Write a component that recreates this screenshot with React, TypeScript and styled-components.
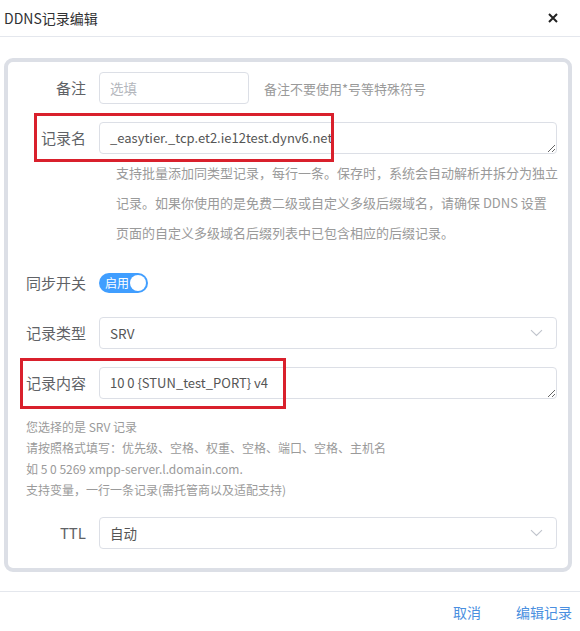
import React from "react";
import styled, { createGlobalStyle } from "styled-components";

const Global = createGlobalStyle`
  html, body { margin: 0; padding: 0; background: #fff; }
  body {
    font-family: "Noto Sans CJK SC", "Microsoft YaHei", sans-serif;
    color: #606266;
    overflow: hidden;
  }
  * { box-sizing: border-box; }
`;

const Dialog = styled.div`
  width: 580px;
  height: 631px;
  display: flex;
  flex-direction: column;
  overflow: hidden;
`;

const Header = styled.div`
  height: 37px;
  flex: none;
  display: flex;
  align-items: center;
  justify-content: space-between;
  padding: 0 22px 1px 4px;
  border-bottom: 1px solid #e4e7ed;
`;

const Title = styled.div`
  font-size: 14px;
  line-height: 20px;
  color: #303133;
`;

const CloseButton = styled.button`
  border: none;
  background: none;
  padding: 0;
  width: 10px;
  height: 10px;
  display: flex;
  cursor: pointer;
`;

const Body = styled.div`
  padding: 21px 8px 0 4px;
  flex: none;
`;

const Panel = styled.div`
  border: 4px solid #dcdfe6;
  border-radius: 9px;
  padding: 10px 11px 19px 0;
  display: flex;
  flex-direction: column;
`;

const FormItem = styled.div<{ $gap?: number }>`
  position: relative;
  display: flex;
  align-items: flex-start;
  margin-bottom: ${(p) => p.$gap ?? 18}px;
  &:last-child { margin-bottom: 0; }
`;

const Label = styled.div`
  width: 91px;
  flex: none;
  padding-right: 13px;
  text-align: right;
  font-size: 15px;
  line-height: 32px;
  color: #606266;
`;

const Content = styled.div`
  flex: 1;
  min-width: 0;
  display: flex;
  align-items: center;
`;

const SmallInput = styled.input`
  width: 150px;
  height: 32px;
  border: 1px solid #dcdfe6;
  border-radius: 4px;
  padding: 0 10px;
  font-family: inherit;
  font-size: 13.5px;
  color: #555;
  outline: none;
  &::placeholder { color: #b4b7bd; }
`;

const InlineHint = styled.span`
  margin-left: 15px;
  font-size: 13px;
  color: #9a9a9a;
`;

const TextArea = styled.textarea`
  display: block;
  width: 100%;
  height: 32px;
  min-height: 32px;
  border: 1px solid #dcdfe6;
  border-radius: 4px;
  padding: 5px 10px;
  font-family: inherit;
  font-size: 13px;
  line-height: 20px;
  color: #555;
  resize: vertical;
  outline: none;
  overflow: hidden;
`;

const NameHelp = styled.div`
  margin: 4px 0 19px 108px;
  font-size: 13px;
  line-height: 30px;
  color: #9a9a9a;
  white-space: nowrap;
`;

const FormatHelp = styled.div`
  margin: 17px 0 17px 18px;
  font-size: 12px;
  line-height: 21px;
  color: #9a9a9a;
  white-space: nowrap;
`;

const Switch = styled.div<{ $on: boolean }>`
  margin-top: 6px;
  width: 49px;
  height: 20px;
  border-radius: 10px;
  background: ${(p) => (p.$on ? "#409eff" : "#dcdfe6")};
  display: flex;
  align-items: center;
  justify-content: space-between;
  padding: 0 2px 0 6px;
`;

const SwitchText = styled.span`
  font-size: 12px;
  line-height: 20px;
  color: #fff;
`;

const Knob = styled.span`
  width: 16px;
  height: 16px;
  border-radius: 50%;
  background: #fff;
`;

const SelectBox = styled.div`
  width: 100%;
  height: 32px;
  border: 1px solid #dcdfe6;
  border-radius: 4px;
  padding: 0 13px 0 10px;
  display: flex;
  align-items: center;
  justify-content: space-between;
  font-size: 13.5px;
  color: #555;
`;

const Highlight = styled.div<{ $l: number; $t: number; $w: number; $h: number }>`
  position: absolute;
  left: ${(p) => p.$l}px;
  top: ${(p) => p.$t}px;
  width: ${(p) => p.$w}px;
  height: ${(p) => p.$h}px;
  border: 3px solid #d9202c;
  pointer-events: none;
  z-index: 2;
`;

const Footer = styled.div`
  margin-top: 19px;
  border-top: 1px solid #e4e7ed;
  height: 52px;
  display: flex;
  align-items: center;
  justify-content: flex-end;
  gap: 35px;
  padding-right: 8px;
`;

const TextButton = styled.button`
  border: none;
  background: none;
  padding: 0;
  font-family: inherit;
  font-size: 14px;
  color: #4a8fe0;
  cursor: pointer;
`;

const Chevron = () => (
  <svg width="13" height="8" viewBox="0 0 13 8" fill="none">
    <path d="M1 1.2 L6.5 6.5 L12 1.2" stroke="#c0c4cc" strokeWidth="1.1" />
  </svg>
);

export default function App() {
  return (
    <Dialog>
      <Global />
      <Header>
        <Title>DDNS记录编辑</Title>
        <CloseButton aria-label="close">
          <svg width="10" height="10" viewBox="0 0 10 10">
            <path d="M1 1 L9 9 M9 1 L1 9" stroke="#222" strokeWidth="2" />
          </svg>
        </CloseButton>
      </Header>
      <Body>
        <Panel>
          <FormItem>
            <Label>备注</Label>
            <Content>
              <SmallInput placeholder="选填" />
              <InlineHint>备注不要使用*号等特殊符号</InlineHint>
            </Content>
          </FormItem>
          <FormItem $gap={0}>
            <Label>记录名</Label>
            <Content>
              <TextArea rows={1} defaultValue="_easytier._tcp.et2.ie12test.dynv6.net" />
            </Content>
            <Highlight $l={26} $t={-9} $w={300} $h={49} />
          </FormItem>
          <NameHelp>
            支持批量添加同类型记录，每行一条。保存时，系统会自动解析并拆分为独立
            <br />
            记录。如果你使用的是免费二级或自定义多级后缀域名，请确保 DDNS 设置
            <br />
            页面的自定义多级域名后缀列表中已包含相应的后缀记录。
          </NameHelp>
          <FormItem>
            <Label>同步开关</Label>
            <Content>
              <Switch $on>
                <SwitchText>启用</SwitchText>
                <Knob />
              </Switch>
            </Content>
          </FormItem>
          <FormItem>
            <Label>记录类型</Label>
            <Content>
              <SelectBox>
                <span>SRV</span>
                <Chevron />
              </SelectBox>
            </Content>
          </FormItem>
          <FormItem $gap={0}>
            <Label>记录内容</Label>
            <Content>
              <TextArea rows={1} defaultValue="10 0 {STUN_test_PORT} v4" />
            </Content>
            <Highlight $l={12} $t={-9} $w={266} $h={51} />
          </FormItem>
          <FormatHelp>
            您选择的是 SRV 记录
            <br />
            请按照格式填写：优先级、空格、权重、空格、端口、空格、主机名
            <br />
            如 5 0 5269 xmpp-server.l.domain.com.
            <br />
            支持变量，一行一条记录(需托管商以及适配支持)
          </FormatHelp>
          <FormItem>
            <Label>TTL</Label>
            <Content>
              <SelectBox>
                <span>自动</span>
                <Chevron />
              </SelectBox>
            </Content>
          </FormItem>
        </Panel>
      </Body>
      <Footer>
        <TextButton>取消</TextButton>
        <TextButton>编辑记录</TextButton>
      </Footer>
    </Dialog>
  );
}
